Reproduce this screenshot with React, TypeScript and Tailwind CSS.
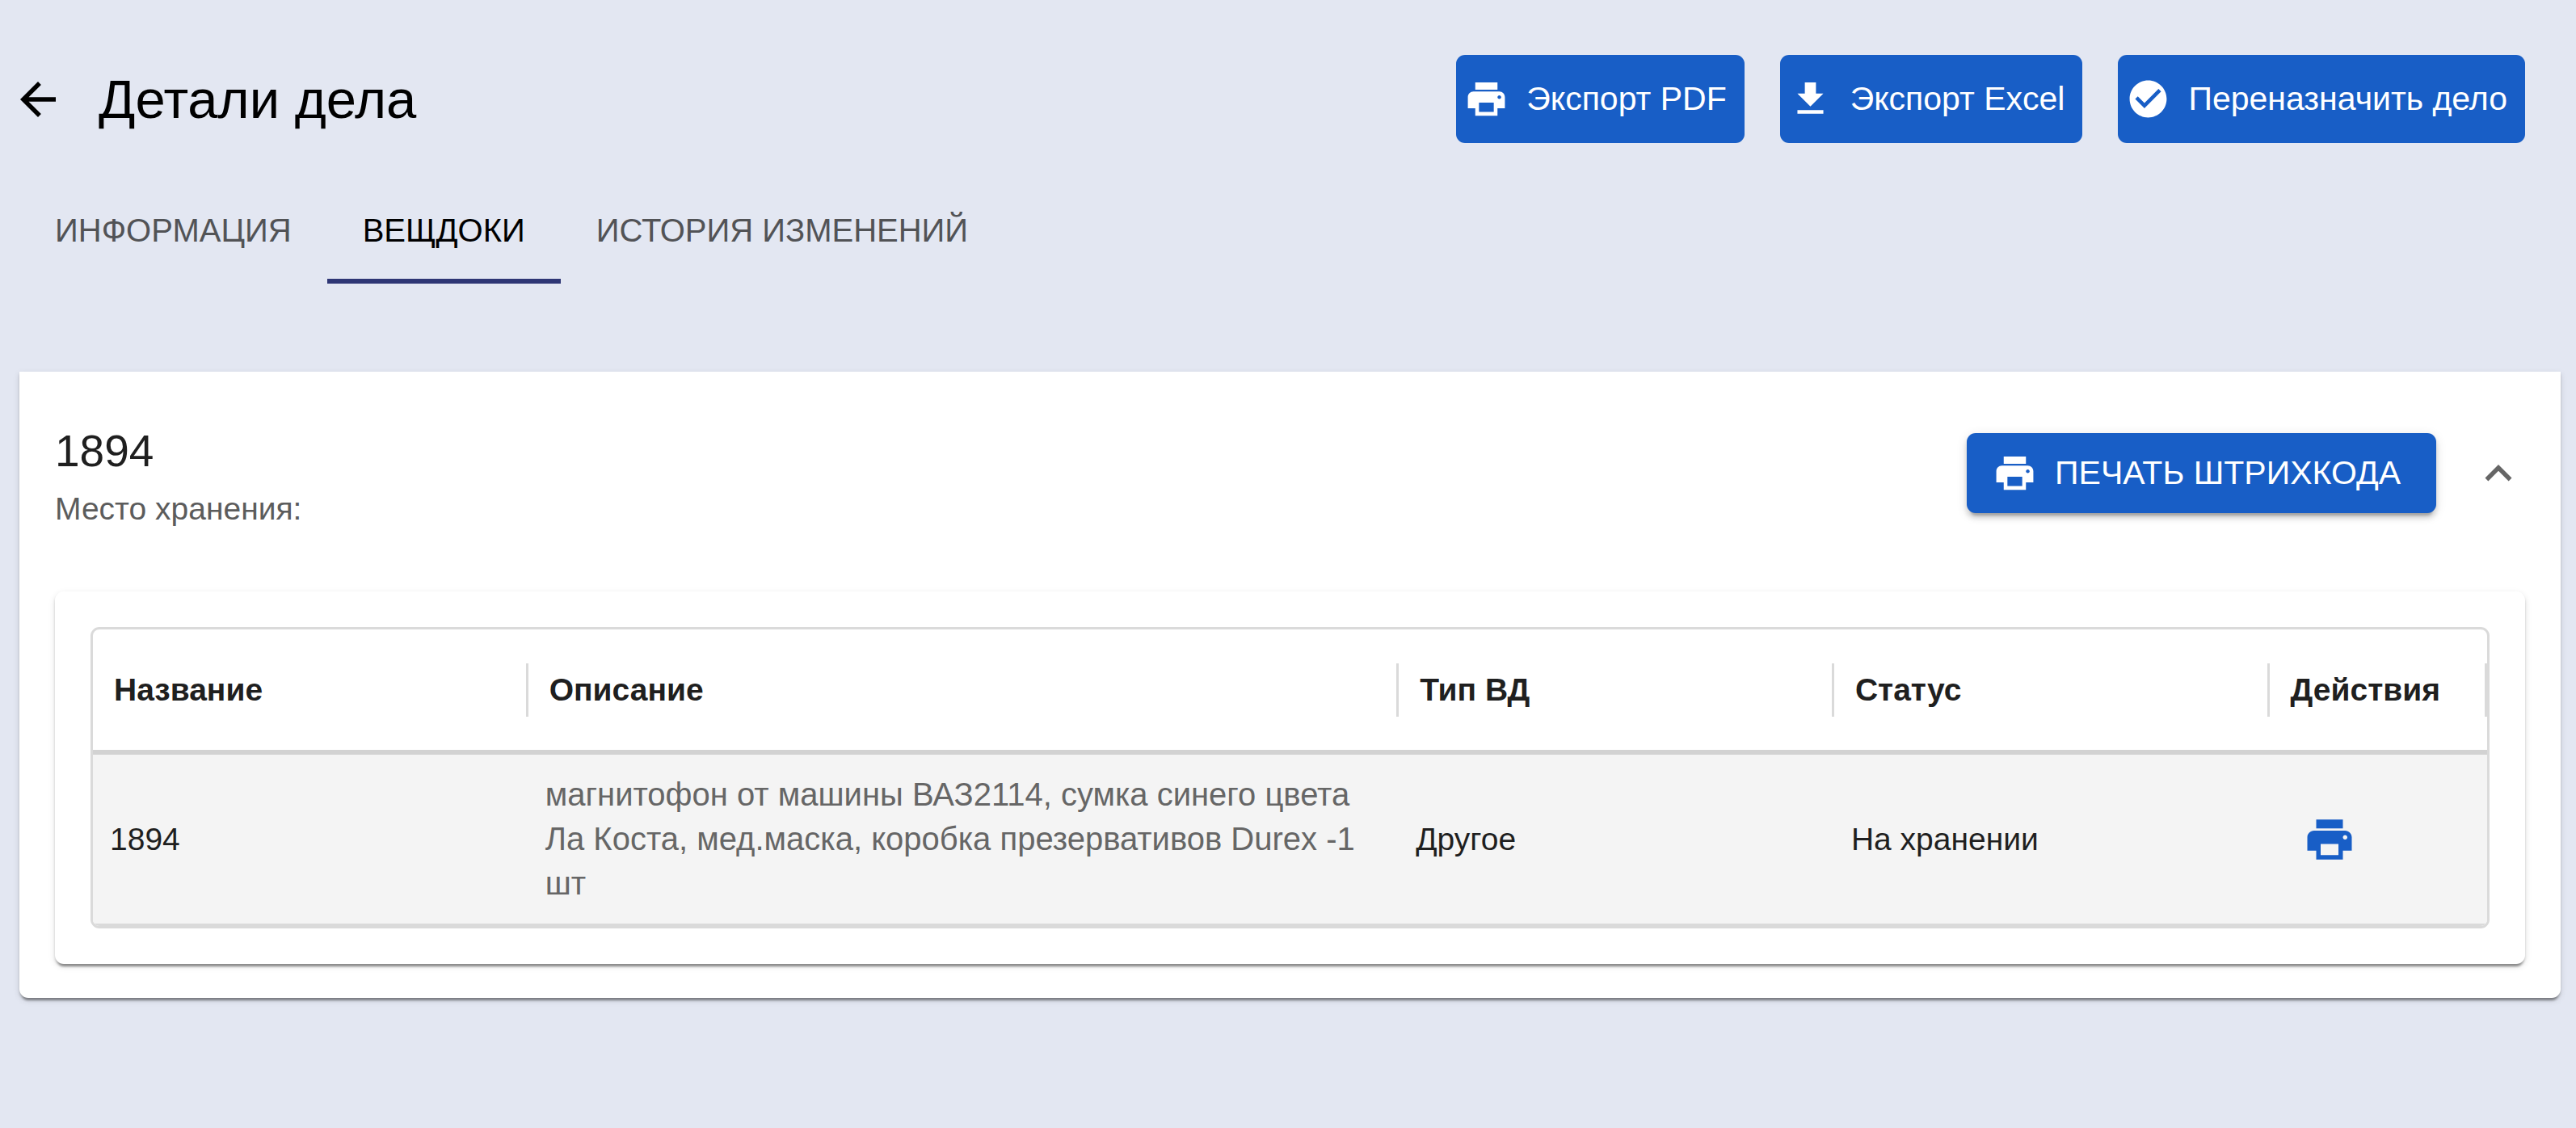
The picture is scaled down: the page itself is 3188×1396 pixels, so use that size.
import type { IconType } from "react-icons";
import {
  MdArrowBack,
  MdCheckCircle,
  MdExpandLess,
  MdGetApp,
  MdPrint,
} from "react-icons/md";

const exportActions: { label: string; icon: IconType }[] = [
  { label: "Экспорт PDF", icon: MdPrint },
  { label: "Экспорт Excel", icon: MdGetApp },
  { label: "Переназначить дело", icon: MdCheckCircle },
];

const tabs = ["ИНФОРМАЦИЯ", "ВЕЩДОКИ", "ИСТОРИЯ ИЗМЕНЕНИЙ"];
const activeTab = "ВЕЩДОКИ";

const columns = [
  { title: "Название", width: "w-2/11" },
  { title: "Описание", width: "w-4/11" },
  { title: "Тип ВД", width: "w-2/11" },
  { title: "Статус", width: "w-2/11" },
  { title: "Действия", width: "w-1/11" },
];

const rows = [
  {
    name: "1894",
    description:
      "магнитофон от машины ВАЗ2114, сумка синего цвета Ла Коста, мед.маска, коробка презервативов Durex -1 шт",
    type: "Другое",
    status: "На хранении",
  },
];

function PageHeader() {
  return (
    <header className="flex items-center justify-between pr-[44px]">
      <div className="flex items-center gap-[42px]">
        <button type="button" aria-label="Назад" className="-ml-[10px]">
          <MdArrowBack className="size-[66px]" />
        </button>
        <h1 className="text-[67px] leading-[88px]">Детали дела</h1>
      </div>
      <div className="flex gap-[44px]">
        {exportActions.map(({ label, icon: Icon }) => (
          <button
            key={label}
            type="button"
            className="flex h-[109px] items-center gap-[22px] rounded-[11px] bg-[#185ec6] pr-[22px] pl-[10px] text-[41px] whitespace-nowrap text-white"
          >
            <Icon className="size-[55px]" />
            {label}
          </button>
        ))}
      </div>
    </header>
  );
}

function Tabs() {
  return (
    <div role="tablist" className="mt-[42px] flex">
      {tabs.map((tab) => (
        <button
          key={tab}
          type="button"
          role="tab"
          aria-selected={tab === activeTab}
          className={
            tab === activeTab
              ? "h-[132px] border-y-[6px] border-t-transparent border-b-[#2e3675] px-[44px] text-[40px] text-black"
              : "h-[132px] border-y-[6px] border-transparent px-[44px] text-[40px] text-[#525356]"
          }
        >
          {tab}
        </button>
      ))}
    </div>
  );
}

function EvidenceTable() {
  return (
    <div className="overflow-hidden rounded-[11px] border-[3px] border-[#dadada]">
      <table className="w-full table-fixed border-collapse text-left text-[39px] leading-[55px]">
        <thead>
          <tr className="border-b-[6px] border-[#d2d2d2]">
            {columns.map((column) => (
              <th key={column.title} scope="col" className={`${column.width} h-[152px] p-0 pl-[26px] font-bold`}>
                <div className="flex items-center justify-between">
                  {column.title}
                  <span className="h-[66px] w-[3px] bg-[#dadada]" />
                </div>
              </th>
            ))}
          </tr>
        </thead>
        <tbody>
          {rows.map((row) => (
            <tr key={row.name} className="border-b-[3px] border-[#dadada] bg-[#f4f4f4]">
              <td className="px-[21px] py-[22px]">{row.name}</td>
              <td className="py-[22px] pr-[32px] pl-[21px] text-[40px] text-[#666666]">{row.description}</td>
              <td className="px-[21px] py-[22px]">{row.type}</td>
              <td className="px-[21px] py-[22px]">{row.status}</td>
              <td className="px-[21px] py-[22px]">
                <button type="button" aria-label="Печать" className="block px-[20px] text-[#185ec6]">
                  <MdPrint className="size-[66px]" />
                </button>
              </td>
            </tr>
          ))}
        </tbody>
      </table>
    </div>
  );
}

function EvidenceCard() {
  return (
    <section className="mt-[109px] rounded-b-[11px] bg-white px-[44px] pb-[42px] shadow-[0_6px_3px_-3px_rgba(0,0,0,0.3),0_3px_3px_0_rgba(0,0,0,0.16),0_3px_8px_0_rgba(0,0,0,0.12)]">
      <div className="flex items-center justify-between pt-[54px] pb-[75px]">
        <div>
          <h2 className="text-[55px] leading-[88px]">1894</h2>
          <p className="text-[39px] leading-[55px] text-[#5c5c5c]">Место хранения:</p>
        </div>
        <div className="flex items-center gap-[44px]">
          <button
            type="button"
            className="flex h-[99px] items-center gap-[22px] rounded-[11px] bg-[#185ec6] pr-[44px] pl-[32px] text-[41px] whitespace-nowrap text-white shadow-[0_8px_3px_-5px_rgba(0,0,0,0.2),0_6px_6px_0_rgba(0,0,0,0.14),0_3px_14px_0_rgba(0,0,0,0.12)]"
          >
            <MdPrint className="size-[55px]" />
            ПЕЧАТЬ ШТРИХКОДА
          </button>
          <button type="button" aria-label="Свернуть" aria-expanded="true" className="text-[#666666]">
            <MdExpandLess className="size-[66px]" />
          </button>
        </div>
      </div>
      <div className="rounded-[11px] bg-white p-[44px] shadow-[0_6px_3px_-3px_rgba(0,0,0,0.3),0_3px_3px_0_rgba(0,0,0,0.16),0_3px_8px_0_rgba(0,0,0,0.12)]">
        <EvidenceTable />
      </div>
    </section>
  );
}

export default function App() {
  return (
    <main className="min-h-screen bg-[#e3e7f2] pt-[68px] pr-[19px] pl-[24px] font-['Liberation_Sans',Arial,sans-serif] text-[#1f1f1f]">
      <div className="text-black">
        <PageHeader />
        <Tabs />
      </div>
      <EvidenceCard />
    </main>
  );
}
